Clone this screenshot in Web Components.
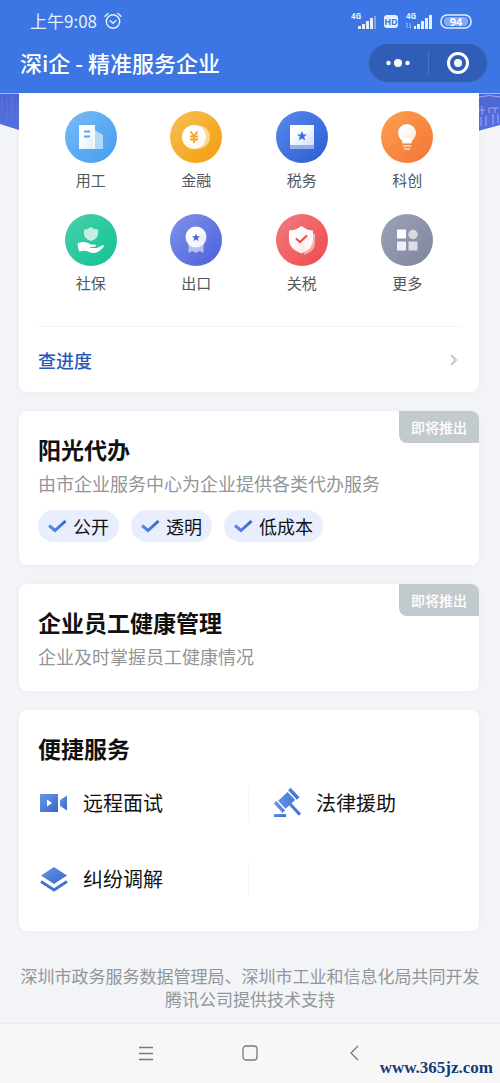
<!DOCTYPE html>
<html lang="zh-CN">
<head>
<meta charset="utf-8">
<meta name="viewport" content="width=device-width, initial-scale=1">
<title>深i企 - 精准服务企业</title>
<style>
body{margin:0;background:#f3f4f7;color:#111;font-family:"Noto Sans CJK SC","Noto Sans",sans-serif}
</style>
</head>
<body>
<sz-app>
  <sz-status-bar slot="top"></sz-status-bar>
  <sz-title-bar slot="top">深i企 - 精准服务企业</sz-title-bar>

  <sz-card joined>
    <sz-service-grid>
      <sz-service icon="work">用工</sz-service>
      <sz-service icon="finance">金融</sz-service>
      <sz-service icon="tax">税务</sz-service>
      <sz-service icon="idea">科创</sz-service>
      <sz-service icon="social">社保</sz-service>
      <sz-service icon="export">出口</sz-service>
      <sz-service icon="customs">关税</sz-service>
      <sz-service icon="more">更多</sz-service>
    </sz-service-grid>
    <sz-more-link>查进度</sz-more-link>
  </sz-card>

  <sz-card heading="阳光代办" note="由市企业服务中心为企业提供各类代办服务" badge="即将推出">
    <sz-tags>
      <sz-tag>公开</sz-tag>
      <sz-tag>透明</sz-tag>
      <sz-tag>低成本</sz-tag>
    </sz-tags>
  </sz-card>

  <sz-card heading="企业员工健康管理" note="企业及时掌握员工健康情况" badge="即将推出"></sz-card>

  <sz-card heading="便捷服务">
    <sz-shortcuts>
      <sz-shortcut icon="video">远程面试</sz-shortcut>
      <sz-shortcut icon="gavel">法律援助</sz-shortcut>
      <sz-shortcut icon="layers">纠纷调解</sz-shortcut>
    </sz-shortcuts>
  </sz-card>

  <sz-footer slot="bottom">深圳市政务服务数据管理局、深圳市工业和信息化局共同开发<br>腾讯公司提供技术支持</sz-footer>
  <sz-nav-bar slot="bottom"></sz-nav-bar>
</sz-app>

<script>
class Base extends HTMLElement {
  constructor() {
    super();
    this.attachShadow({ mode: 'open' });
  }
  connectedCallback() {
    this.shadowRoot.innerHTML =
      `<style>*{box-sizing:border-box}:host{display:block;box-sizing:border-box}svg{display:block}${this.css()}</style>${this.html()}`;
  }
  css() { return ''; }
  html() { return '<slot></slot>'; }
}

customElements.define('sz-app', class extends Base {
  css() {
    return `
    :host{min-height:100vh;display:flex;flex-direction:column}
    header{background:#3b76e4}
    main{position:relative;display:flex;flex-direction:column;gap:19px;padding:0 21px 0 19px}
    .hero{position:absolute;top:0;left:0;width:100%;height:40px}
    footer{margin-top:auto}`;
  }
  html() {
    return `
    <header><slot name="top"></slot></header>
    <main>
      <svg class="hero" viewBox="0 0 500 40" preserveAspectRatio="none" aria-hidden="true">
        <defs><linearGradient id="g" x2="0" y2="1"><stop stop-color="#4a66d2"/><stop offset="1" stop-color="#5570e0"/></linearGradient></defs>
        <path d="M0 0H500V32L478 38H22L0 31Z" fill="url(#g)"/>
        <path d="M2 3v16M7 5v20M12 3v24M17 9v20" stroke="#7270dc" stroke-width="2" opacity=".45"/>
        <path d="M479 4q10-3 21 0M479 17h6M482 13v9M489 20v-5h10M495 15v5" stroke="#a9a8ef" fill="none"/>
        <path d="M481 24v9M486 23v10M493 21v11M498 21v9" stroke="#8088e6" stroke-width="2"/>
        <path d="M0 .5H500" stroke="#9dbaf3"/>
      </svg>
      <slot></slot>
    </main>
    <footer><slot name="bottom"></slot></footer>`;
  }
});

customElements.define('sz-status-bar', class extends Base {
  css() {
    return `
    :host{height:42px;padding:0 28px 0 30px;display:flex;align-items:center;justify-content:space-between;color:#e6eefc}
    div{display:flex;align-items:center;gap:7px}
    time{font-size:17px;line-height:24px}
    text{font-family:"Open Sans","Noto Sans",sans-serif;font-weight:700}`;
  }
  html() {
    return `
    <div><time>上午9:08</time>
      <svg width="18" height="18" viewBox="0 0 18 18" fill="none" stroke="currentColor" stroke-width="1.5" stroke-linecap="round"><circle cx="9" cy="9.5" r="6.7"/><path d="M6.3 8.8 9 11.2l2.8-2.4M1 4.2 4 1.5M17 4.2 14 1.5"/></svg>
    </div>
    <div>
      <svg width="26" height="26" viewBox="0 -4 26 26" fill="currentColor"><text x="0" y="7" font-size="8">4G</text><path d="M7 14h3v3H7zM11 12h3v5h-3zM15 9h3v8h-3zM19 6h3v11h-3z"/><path opacity=".4" d="M23 4h2v13h-2z"/></svg>
      <svg width="14" height="18" viewBox="0 0 14 18"><rect y="3" width="14" height="13" rx="3" fill="currentColor"/><text x="7" y="13" font-size="9" text-anchor="middle" fill="#3b76e4">HD</text></svg>
      <svg width="28" height="26" viewBox="0 -4 28 26" fill="currentColor"><text x="1" y="7" font-size="8">4G</text><path d="M9 14h2v3H9zM12 12h3v5h-3zM16 9h3v8h-3zM20 6h3v11h-3zM24 3h3v14h-3z"/><path d="M2 16v-5l-1 1M5 11v5l1-1" fill="none" stroke="currentColor" opacity=".6"/></svg>
      <svg width="32" height="18" viewBox="0 0 32 18"><rect x="1" y="3" width="30" height="13" rx="6" fill="#3b76e4" stroke="currentColor" stroke-width="1.5"/><rect x="4" y="5" width="24" height="9" rx="4" fill="#86aaf0"/><text x="16" y="13.5" font-size="11" text-anchor="middle" fill="#fff">94</text></svg>
    </div>`;
  }
});

customElements.define('sz-title-bar', class extends Base {
  css() {
    return `
    :host{height:51px;padding:1px 12px 10px 20px;display:flex;align-items:center;justify-content:space-between;color:#fff}
    h1{margin:0;font-size:22px;line-height:32px;padding-bottom:2px;font-weight:500}
    .capsule{display:grid;grid-template-columns:1fr 1px 1fr;align-items:center;width:120px;height:40px;border-radius:20px;background:#2f5db8;border:1px solid #4374cb}
    i{height:24px;background:#4673c6}
    button{display:flex;align-items:center;justify-content:center;height:38px;padding:0;border:0;background:none;color:#fff}`;
  }
  html() {
    return `
    <h1><slot></slot></h1>
    <div class="capsule">
      <button aria-label="更多"><svg width="24" height="24" fill="currentColor"><circle cx="2.5" cy="12" r="2.2"/><circle cx="12" cy="12" r="4"/><circle cx="21.5" cy="12" r="2.2"/></svg></button>
      <i></i>
      <button aria-label="关闭"><svg width="24" height="24"><circle cx="12" cy="12" r="9.5" fill="none" stroke="currentColor" stroke-width="3"/><circle cx="12" cy="12" r="4" fill="currentColor"/></svg></button>
    </div>`;
  }
});

customElements.define('sz-card', class extends Base {
  css() {
    return `
    :host{position:relative;background:#fff;border-radius:8px;padding:22px 19px 23px;box-shadow:0 1px 6px rgba(60,70,90,.04)}
    :host([joined]){padding:18px 19px 0;border-radius:0 0 8px 8px}
    h2{margin:0;font-size:23px;line-height:32px;font-weight:700;color:#111}
    p{margin:6px 0 0;font-size:18px;line-height:24px;color:#929598}
    .badge{position:absolute;top:0;right:0;padding:0 12px;border-radius:0 8px 0 8px;background:#c3cacd;color:#fff;font-size:14px;line-height:32px;font-weight:500}`;
  }
  html() {
    const a = n => this.getAttribute(n);
    return (a('heading') ? `<h2>${a('heading')}</h2>` : '') +
      (a('note') ? `<p>${a('note')}</p>` : '') +
      (a('badge') ? `<span class="badge">${a('badge')}</span>` : '') + '<slot></slot>';
  }
});

customElements.define('sz-service-grid', class extends Base {
  css() { return ':host{display:grid;grid-template-columns:repeat(4,1fr);row-gap:23px;padding-bottom:32px;border-bottom:1px solid #f2f3f5}'; }
});

const STAR = 'M0-5 1.4-1.6 5-1.5 2.2.8 3.1 4.4 0 2.4-3.1 4.4-2.2.8-5-1.5-1.4-1.6Z';
const SERVICES = {
  work: ['#72b8f6', '#48a0f0', `<path d="M28 18l10 6v14H28z" fill="#fff" opacity=".55"/><path d="M14 14h16v24H14z" fill="url(#w)"/><path d="M19 20.5h6M19 25.5h6" stroke="#55a6f2" stroke-width="1.8"/>`],
  finance: ['#f7bd4c', '#f4a012', `<circle cx="28.5" cy="26" r="11.5" fill="#fff" opacity=".5"/><circle cx="24" cy="26" r="12" fill="url(#w)"/><path d="M20.5 20.5 24 25l3.5-4.5M24 25v7M20 25.5h8M20 28.5h8" stroke="#f3a72b" stroke-width="1.8" fill="none"/>`],
  tax: ['#5585e8', '#2e61d6', `<path d="M14 34h24v4H14z" fill="#fff" opacity=".45"/><path d="M14 14h24v20H14z" fill="url(#w)"/><path d="${STAR}" transform="translate(26 25)" fill="#3c70dd"/>`],
  idea: ['#fb9d4d', '#f67738', `<circle cx="26" cy="22" r="9" fill="url(#w)"/><path d="M19 27q2.5 2.5 2.5 5.5h9q0-3 2.5-5.5z" fill="#fff" opacity=".9"/><path d="M22 35h8M23 38h6" stroke="#ffe0c8" stroke-width="1.6"/>`],
  social: ['#43cfa8', '#16c397', `<path d="M26 13q3.5 2.5 7 2.5v4.5q0 4.5-7 7-7-2.5-7-7v-4.5q3.5 0 7-2.5z" fill="#fff" opacity=".7"/><path d="M13.5 29q5-2 9.5 0l3 1.5h3.5q2 .5 1.500 2l-6 .8v.7h7l5-2.500q2-.5 2 .8-5 6.700-10 6.700-3 0-6-1.500-4-1.500-8.500.3-2-4-2-8.800z" fill="#fff"/>`],
  export: ['#7b8ee9', '#5064de', `<path d="M18.500 28h15v11l-4-2-3.500 2-3.500-2-4 2z" fill="#fff" opacity=".55"/><circle cx="26" cy="23" r="10.500" fill="url(#w)"/><path d="${STAR}" transform="translate(26 23.500) scale(.8)" fill="#4a67da"/>`],
  customs: ['#f2777a', '#ee4e52', `<path d="M30 17l9 3v10q0 7-11 11z" fill="#fff" opacity=".5"/><path d="M25.500 12q6 4.500 11.500 4.500V26q0 9-11.500 13.500Q13 35 13 26v-9.500q6.500 0 12.500-4.500z" fill="url(#w)"/><path d="M20 24.500l4 3.500 7-6.500" fill="none" stroke="#e95055" stroke-width="2.200"/>`],
  more: ['#9aa1b6', '#80879f', `<path d="M16 15.500h9v9h-9z" fill="#fff"/><circle cx="32" cy="20.500" r="4.700" fill="#fff" opacity=".65"/><path d="M16 27.500h9v9h-9z" fill="#fff" opacity=".85"/><path d="M27.500 27.500h9v9h-9z" fill="#fff" opacity=".7"/>`]
};

customElements.define('sz-service', class extends Base {
  css() {
    return 'a{display:flex;flex-direction:column;align-items:center;gap:6px;color:#50565c;text-decoration:none;font-size:15px;line-height:22px}';
  }
  html() {
    const [from, to, art] = SERVICES[this.getAttribute('icon')];
    return `<a href="#"><svg width="52" height="52" viewBox="0 0 52 52" aria-hidden="true">
      <defs><linearGradient id="b" x2="1" y2="1"><stop offset=".1" stop-color="${from}"/><stop offset=".9" stop-color="${to}"/></linearGradient>
      <linearGradient id="w" x2="1" y2="1"><stop offset=".3" stop-color="#fff"/><stop offset="1" stop-color="#fff" stop-opacity=".78"/></linearGradient></defs>
      <circle cx="26" cy="26" r="26" fill="url(#b)"/>${art}</svg><span><slot></slot></span></a>`;
  }
});

customElements.define('sz-more-link', class extends Base {
  css() {
    return 'a{display:flex;align-items:center;justify-content:space-between;height:65px;color:#255bb8;text-decoration:none;font-size:18px;line-height:24px;font-weight:500}';
  }
  html() {
    return '<a href="#"><slot></slot><svg width="12" height="14" fill="none" stroke="#c3c6ca" stroke-width="2"><path d="M3 2l5 5-5 5"/></svg></a>';
  }
});

customElements.define('sz-tags', class extends Base {
  css() { return ':host{display:flex;flex-wrap:wrap;gap:12px;margin-top:15px}'; }
});

customElements.define('sz-tag', class extends Base {
  css() { return ':host{display:flex;align-items:center;gap:6px;padding:0 10px;border-radius:16px;background:#e8eefd;color:#111;font-size:18px;line-height:32px}'; }
  html() {
    return `<svg width="19" height="14" viewBox="0 0 19 14" fill="none" stroke-width="3"><defs><linearGradient id="c" x2="1" y2="0"><stop stop-color="#5f8ce8"/><stop offset="1" stop-color="#3566c4"/></linearGradient></defs><path d="M1 6.5 7 11.5 17.5 2" stroke="url(#c)"/></svg><slot></slot>`;
  }
});

customElements.define('sz-shortcuts', class extends Base {
  css() { return ':host{display:grid;grid-template-columns:1fr 1fr;row-gap:42px;padding:22px 0 12px}::slotted(:nth-child(odd)){border-right:1px solid #f4f5f6}::slotted(:nth-child(even)){padding-left:22px}'; }
});

const SHORTCUTS = {
  video: '<path d="M2 8h18v18H2zM9 13.5v7l5-3.5z" fill-rule="evenodd"/><path d="M22 14l7-4.5v15L22 20z"/>',
  gavel: '<g transform="translate(16 14) rotate(-43)"><path d="M-7-5.5H6v11H-7zM-12-6.5h3.5v13h-3.5zM7.5-6.5H11v13H7.5zM-2 5.5H1V19.5h-3z"/></g><path d="M3 28h12v3H3z"/>',
  layers: '<path d="M16 5l13 8.5L16 22 3 13.5z"/><path d="M3 19.5 16 28l13-8.5" fill="none" stroke="#4373d0" stroke-width="2.8"/>'
};

customElements.define('sz-shortcut', class extends Base {
  css() { return 'a{display:flex;align-items:center;gap:13px;height:34px;color:#111;text-decoration:none;font-size:20px;line-height:28px}'; }
  html() {
    return `<a href="#"><svg width="32" height="34" viewBox="0 0 32 34" aria-hidden="true"><defs><linearGradient id="s" x2="1" y2="1"><stop stop-color="#6995ed"/><stop offset="1" stop-color="#3568c6"/></linearGradient></defs><g fill="url(#s)">${SHORTCUTS[this.getAttribute('icon')]}</g></svg><slot></slot></a>`;
  }
});

customElements.define('sz-footer', class extends Base {
  css() { return ':host{padding:32px 12px 13px;text-align:center;color:#929699;font-size:17px;line-height:23px}'; }
});

customElements.define('sz-nav-bar', class extends Base {
  css() {
    return `
    :host{position:relative;background:#f7f7f7;border-top:1px solid #eceded}
    nav{display:flex;justify-content:center;gap:60px;height:59px;padding-bottom:2px;align-items:center}
    button{display:flex;align-items:center;justify-content:center;width:44px;height:44px;padding:0;border:0;background:none;color:#77797b}
    .site{position:absolute;right:7px;bottom:4px;font:700 17px/22px "Liberation Serif",serif;color:#123a78;text-shadow:0 0 2px #fff}`;
  }
  html() {
    const b = (label, d) => `<button aria-label="${label}"><svg width="16" height="16" viewBox="0 0 16 16" fill="none" stroke="currentColor" stroke-width="1.3">${d}</svg></button>`;
    return `<nav>${b('菜单', '<path d="M1 2.5h14M1 8.5h14M1 14.5h14"/>')}${b('主页', '<rect x="1" y="1" width="14" height="14" rx="3"/>')}${b('返回', '<path d="M12 1 5 8l7 7"/>')}</nav><span class="site">www.365jz.com</span>`;
  }
});
</script>
</body>
</html>
